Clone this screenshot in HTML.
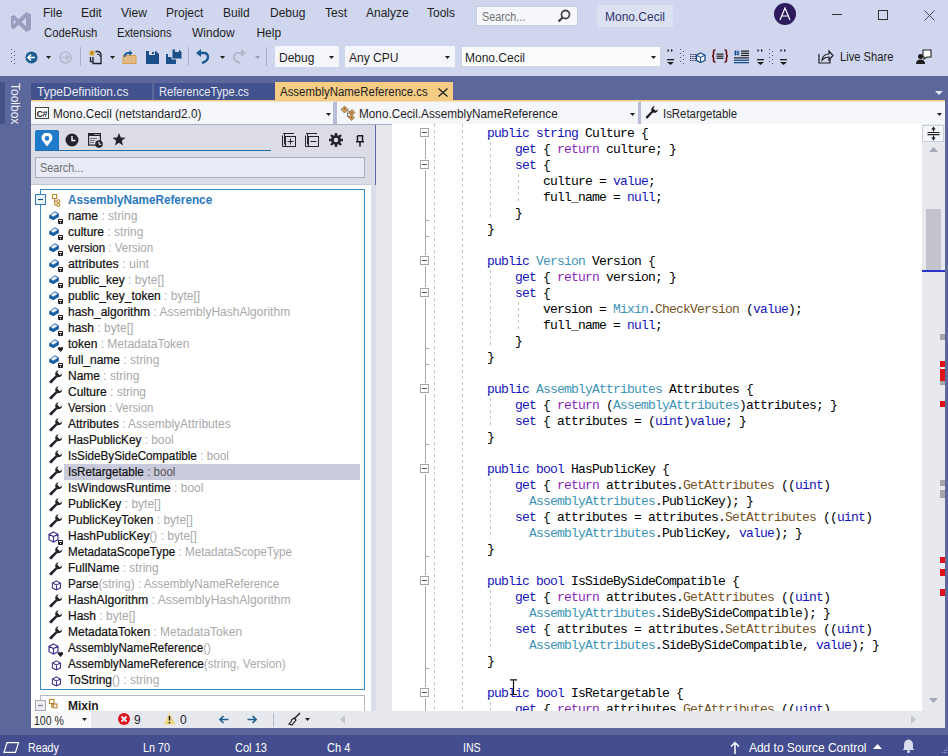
<!DOCTYPE html>
<html><head><meta charset="utf-8"><style>
html,body{margin:0;padding:0;}
body{width:948px;height:756px;overflow:hidden;position:relative;background:#5C689C;font-family:"Liberation Sans",sans-serif;}
.r{position:absolute;}
.b{-webkit-text-stroke:0.2px #101010;}
.t{position:absolute;white-space:pre;line-height:14px;}
.code{position:absolute;white-space:pre;font-family:"Liberation Mono",monospace;font-size:13px;letter-spacing:-0.8px;line-height:16px;color:#000;}
</style></head><body>
<div class="r" style="left:0px;top:0px;width:948px;height:76px;background:#CFD6EE;"></div>
<svg class="r" style="left:11px;top:12px;" width="20" height="20" viewBox="0 0 20 20"><path d="M0 4.3 L3 3 L7.6 7.3 L15.2 0 L20 2.4 V17.6 L15.2 20 L7.6 12.7 L3 17 L0 15.7 Z M2.5 7.6 V12.4 L5 10 Z M15 5.7 L10.6 10 L15 14.3 Z" fill="#9A9DBE" fill-rule="evenodd"/></svg>
<div class="t" style="left:43px;top:6px;font-size:12px;color:#1E1E1E;font-weight:normal;">File</div>
<div class="t" style="left:81px;top:6px;font-size:12px;color:#1E1E1E;font-weight:normal;">Edit</div>
<div class="t" style="left:121px;top:6px;font-size:12px;color:#1E1E1E;font-weight:normal;">View</div>
<div class="t" style="left:166px;top:6px;font-size:12px;color:#1E1E1E;font-weight:normal;">Project</div>
<div class="t" style="left:223px;top:6px;font-size:12px;color:#1E1E1E;font-weight:normal;">Build</div>
<div class="t" style="left:270px;top:6px;font-size:12px;color:#1E1E1E;font-weight:normal;">Debug</div>
<div class="t" style="left:325px;top:6px;font-size:12px;color:#1E1E1E;font-weight:normal;">Test</div>
<div class="t" style="left:366px;top:6px;font-size:12px;color:#1E1E1E;font-weight:normal;">Analyze</div>
<div class="t" style="left:427px;top:6px;font-size:12px;color:#1E1E1E;font-weight:normal;">Tools</div>
<div class="t" style="left:43.5px;top:26px;font-size:12px;color:#1E1E1E;font-weight:normal;transform-origin:0 0;transform:scaleX(0.94);">CodeRush</div>
<div class="t" style="left:117px;top:26px;font-size:12px;color:#1E1E1E;font-weight:normal;transform-origin:0 0;transform:scaleX(0.93);">Extensions</div>
<div class="t" style="left:192px;top:26px;font-size:12px;color:#1E1E1E;font-weight:normal;transform-origin:0 0;transform:scaleX(1);">Window</div>
<div class="t" style="left:256.4px;top:26px;font-size:12px;color:#1E1E1E;font-weight:normal;transform-origin:0 0;transform:scaleX(1);">Help</div>
<div class="r" style="left:476px;top:6px;width:102px;height:20px;background:#F6F7FB;box-sizing:border-box;border:1px solid #C9CEE2;"></div>
<div class="t" style="left:481.5px;top:10px;font-size:12px;color:#717171;font-weight:normal;transform-origin:0 0;transform:scaleX(0.9);">Search...</div>
<svg class="r" style="left:557px;top:9px;" width="14" height="14" viewBox="0 0 14 14"><circle cx="8.5" cy="5.5" r="4" fill="none" stroke="#4A4A4A" stroke-width="1.8"/><path d="M5.7 8.3 L1.5 12.5" stroke="#4A4A4A" stroke-width="2.4"/></svg>
<div class="r" style="left:597px;top:5px;width:76px;height:22px;background:#DCE1F3;"></div>
<div class="t" style="left:605px;top:10px;font-size:12px;color:#30346A;font-weight:normal;">Mono.Cecil</div>
<svg class="r" style="left:774px;top:3px;" width="22" height="22" viewBox="0 0 22 22"><circle cx="11" cy="11" r="11" fill="#2D1B5E"/><path d="M6 17 L11 5 L16 17 M7.8 13 H14.2" stroke="#fff" stroke-width="1.2" fill="none"/></svg>
<div class="r" style="left:832px;top:14px;width:10px;height:1px;background:#333;"></div>
<div class="r" style="left:878px;top:10px;width:10px;height:10px;background:transparent;box-sizing:border-box;border:1px solid #333;"></div>
<svg class="r" style="left:924px;top:10px;" width="11" height="11" viewBox="0 0 11 11"><path d="M0.5 0.5 L10.5 10.5 M10.5 0.5 L0.5 10.5" stroke="#3A3A48" stroke-width="0.9"/></svg>
<svg class="r" style="left:11px;top:48px;" width="6" height="18" viewBox="0 0 6 18"><rect x="0" y="1" width="1" height="1" fill="#5A5A6A"/><rect x="3" y="3" width="1" height="1" fill="#5A5A6A"/><rect x="0" y="5" width="1" height="1" fill="#5A5A6A"/><rect x="3" y="7" width="1" height="1" fill="#5A5A6A"/><rect x="0" y="9" width="1" height="1" fill="#5A5A6A"/><rect x="3" y="11" width="1" height="1" fill="#5A5A6A"/><rect x="0" y="13" width="1" height="1" fill="#5A5A6A"/><rect x="3" y="15" width="1" height="1" fill="#5A5A6A"/></svg>
<svg class="r" style="left:25px;top:51px;" width="13" height="13" viewBox="0 0 13 13"><circle cx="6.5" cy="6.5" r="6" fill="#1B5D93"/><path d="M3 6.5 H10 M6 3.5 L3 6.5 L6 9.5" stroke="#fff" stroke-width="1.6" fill="none"/></svg>
<svg class="r" style="left:46px;top:56px;" width="5" height="3" viewBox="0 0 5 3"><path d="M0 0 H5 L2.5 3 Z" fill="#1E1E1E"/></svg>
<svg class="r" style="left:59px;top:51px;" width="13" height="13" viewBox="0 0 13 13"><circle cx="6.5" cy="6.5" r="5.5" fill="none" stroke="#B4B9CC" stroke-width="1.6"/><path d="M3 6.5 H9.5 M7 4 L9.5 6.5 L7 9" stroke="#B4B9CC" stroke-width="1.6" fill="none"/></svg>
<div class="r" style="left:80px;top:47px;width:1px;height:19px;background:#A9AFC6;"></div>
<svg class="r" style="left:88px;top:49px;" width="15" height="16" viewBox="0 0 15 16"><path d="M2.5 8 V12.5 H4.5" stroke="#1E1E28" stroke-width="1.3" fill="none"/><path d="M5 8 V14.5 H13 V6 Q13 2.5 9.5 2.5 H7.5" stroke="#1E1E28" stroke-width="1.3" fill="none"/><path d="M12.5 8 Q12.5 5 9 5" stroke="#1E1E28" stroke-width="1" fill="none"/><g stroke="#D9A21C" stroke-width="1.1"><path d="M4 1 V7 M1 4 H7 M1.8 1.8 L6.2 6.2 M6.2 1.8 L1.8 6.2"/></g><circle cx="4" cy="4" r="1.2" fill="#B07A10"/></svg>
<svg class="r" style="left:110px;top:56px;" width="5" height="3" viewBox="0 0 5 3"><path d="M0 0 H5 L2.5 3 Z" fill="#1E1E1E"/></svg>
<svg class="r" style="left:122px;top:49px;" width="15" height="16" viewBox="0 0 15 16"><rect x="1" y="6.5" width="13" height="8" fill="#E9B77A" stroke="#D79D55" stroke-width="1"/><g fill="#C9C2B8"><rect x="3" y="9" width="2" height="1"/><rect x="7" y="9" width="2" height="1"/><rect x="11" y="9" width="1" height="1"/><rect x="2" y="12" width="2" height="1"/><rect x="6" y="12" width="3" height="1"/><rect x="10" y="12" width="2" height="1"/></g><path d="M2.5 8 Q2.5 4 7 4 H8" stroke="#1B5D93" stroke-width="1.8" fill="none"/><path d="M7.5 1 L10.5 4 L7.5 7 Z" fill="#1B5D93"/></svg>
<svg class="r" style="left:146px;top:51px;" width="13" height="13" viewBox="0 0 13 13"><path d="M0 0 H10 L13 3 V13 H0 Z" fill="#1B4F8A"/><rect x="3" y="0" width="6" height="4" fill="#CFD6EE"/><rect x="6" y="1" width="2" height="2" fill="#1B4F8A"/></svg>
<svg class="r" style="left:166px;top:49px;" width="16" height="15" viewBox="0 0 16 15"><path d="M0 5 H8 L10 7 V15 H0 Z" fill="#1B4F8A"/><path d="M6 0 H13 L16 3 V10 H6 Z" fill="#1B4F8A" stroke="#CFD6EE" stroke-width="1"/><rect x="2" y="5" width="4" height="3" fill="#CFD6EE"/><rect x="9" y="0" width="4" height="3" fill="#CFD6EE"/></svg>
<div class="r" style="left:188px;top:47px;width:1px;height:19px;background:#A9AFC6;"></div>
<svg class="r" style="left:196px;top:49px;" width="14" height="15" viewBox="0 0 14 15"><path d="M2 4 H8 Q12 4 12 8 Q12 12 6 14" stroke="#1B5D93" stroke-width="2.4" fill="none"/><path d="M0 4 L5 0 V8 Z" fill="#1B5D93"/></svg>
<svg class="r" style="left:220px;top:56px;" width="5" height="3" viewBox="0 0 5 3"><path d="M0 0 H5 L2.5 3 Z" fill="#1E1E1E"/></svg>
<svg class="r" style="left:232px;top:49px;" width="14" height="15" viewBox="0 0 14 15"><path d="M12 4 H6 Q2 4 2 8 Q2 12 8 14" stroke="#B4B9CC" stroke-width="2.2" fill="none"/><path d="M14 4 L9 0 V8 Z" fill="#B4B9CC"/></svg>
<svg class="r" style="left:255px;top:56px;" width="5" height="3" viewBox="0 0 5 3"><path d="M0 0 H5 L2.5 3 Z" fill="#9A9FB5"/></svg>
<div class="r" style="left:266px;top:47px;width:1px;height:19px;background:#A9AFC6;"></div>
<div class="r" style="left:275px;top:46px;width:64px;height:21px;background:#F5F6FB;box-sizing:border-box;border:none;"></div>
<div class="t" style="left:279px;top:51px;font-size:12px;color:#1E1E1E;font-weight:normal;">Debug</div>
<svg class="r" style="left:329px;top:56px;" width="5" height="3" viewBox="0 0 5 3"><path d="M0 0 H5 L2.5 3 Z" fill="#1E1E1E"/></svg>
<div class="r" style="left:345px;top:46px;width:110px;height:21px;background:#F5F6FB;box-sizing:border-box;border:none;"></div>
<div class="t" style="left:349px;top:51px;font-size:12px;color:#1E1E1E;font-weight:normal;">Any CPU</div>
<svg class="r" style="left:445px;top:56px;" width="5" height="3" viewBox="0 0 5 3"><path d="M0 0 H5 L2.5 3 Z" fill="#1E1E1E"/></svg>
<div class="r" style="left:461px;top:46px;width:200px;height:21px;background:#FAFBFD;box-sizing:border-box;border:1px solid #D0D4E4;"></div>
<div class="t" style="left:465px;top:51px;font-size:12px;color:#1E1E1E;font-weight:normal;">Mono.Cecil</div>
<svg class="r" style="left:651px;top:56px;" width="5" height="3" viewBox="0 0 5 3"><path d="M0 0 H5 L2.5 3 Z" fill="#1E1E1E"/></svg>
<svg class="r" style="left:667px;top:48px;" width="7" height="18" viewBox="0 0 7 18"><path d="M0.5 1 L2.5 2.5 L0.5 4 Z M4 1 L6 2.5 L4 4 Z" fill="#1E1E1E"/><rect x="0" y="11" width="7" height="1.3" fill="#1E1E1E"/><path d="M0 14 H7 L3.5 17 Z" fill="#1E1E1E"/></svg>
<svg class="r" style="left:680px;top:48px;" width="5" height="18" viewBox="0 0 5 18"><rect x="0" y="1" width="1" height="1" fill="#5A5A6A"/><rect x="3" y="3" width="1" height="1" fill="#5A5A6A"/><rect x="0" y="5" width="1" height="1" fill="#5A5A6A"/><rect x="3" y="7" width="1" height="1" fill="#5A5A6A"/><rect x="0" y="9" width="1" height="1" fill="#5A5A6A"/><rect x="3" y="11" width="1" height="1" fill="#5A5A6A"/><rect x="0" y="13" width="1" height="1" fill="#5A5A6A"/><rect x="3" y="15" width="1" height="1" fill="#5A5A6A"/></svg>
<svg class="r" style="left:689px;top:52px;" width="17" height="11" viewBox="0 0 17 11"><g fill="#2A2A3A"><rect x="1.0" y="2" width="1" height="1"/><rect x="1.0" y="4" width="1" height="1"/><rect x="1.0" y="6" width="1" height="1"/><rect x="1.0" y="8" width="1" height="1"/><rect x="2.7" y="2" width="1" height="1"/><rect x="2.7" y="4" width="1" height="1"/><rect x="2.7" y="6" width="1" height="1"/><rect x="2.7" y="8" width="1" height="1"/><rect x="4.4" y="2" width="1" height="1"/><rect x="4.4" y="4" width="1" height="1"/><rect x="4.4" y="6" width="1" height="1"/><rect x="4.4" y="8" width="1" height="1"/><rect x="6.1" y="2" width="1" height="1"/><rect x="6.1" y="4" width="1" height="1"/><rect x="6.1" y="6" width="1" height="1"/><rect x="6.1" y="8" width="1" height="1"/></g><path d="M11.5 1 L16 3.2 V8.3 L11.5 10.5 L7.5 8.3 V3.2 Z" fill="#fff" stroke="#1B4F8A" stroke-width="1.3"/><path d="M7.5 3.2 L11.5 5.4 L16 3.2 M11.5 5.4 V10.5" stroke="#1B4F8A" stroke-width="1.1" fill="none"/></svg>
<svg class="r" style="left:711px;top:49px;" width="18" height="14" viewBox="0 0 18 14"><path d="M4.5 0.8 Q2.5 0.8 2.5 3 V5.5 Q2.5 7 1 7 Q2.5 7 2.5 8.5 V11 Q2.5 13.2 4.5 13.2 M13.5 0.8 Q15.5 0.8 15.5 3 V5.5 Q15.5 7 17 7 Q15.5 7 15.5 8.5 V11 Q15.5 13.2 13.5 13.2" stroke="#6A1010" stroke-width="1.6" fill="none"/><g fill="#1E1E1E"><rect x="5.5" y="4.5" width="7" height="1.2"/><rect x="5.5" y="6.6" width="7" height="1.2"/><rect x="5.5" y="8.7" width="7" height="1.2"/></g></svg>
<svg class="r" style="left:734px;top:50px;" width="15" height="14" viewBox="0 0 15 14"><path d="M1.5 0.5 V5.5 M4 0.5 V5.5 M0 2 H5.5 M0 4.2 H5.5" stroke="#1B4F8A" stroke-width="1"/><g fill="#1E1E1E"><rect x="7" y="0.5" width="8" height="1.2"/><rect x="7" y="2.7" width="8" height="1.2"/><rect x="7" y="4.9" width="8" height="1.2"/><rect x="0" y="7.3" width="15" height="1.2"/></g><g fill="#1B4F8A"><rect x="0" y="9.6" width="15" height="1.3"/><rect x="0" y="12" width="15" height="1.3"/></g></svg>
<svg class="r" style="left:757px;top:48px;" width="7" height="18" viewBox="0 0 7 18"><path d="M0.5 1 L2.5 2.5 L0.5 4 Z M4 1 L6 2.5 L4 4 Z" fill="#1E1E1E"/><rect x="0" y="11" width="7" height="1.3" fill="#1E1E1E"/><path d="M0 14 H7 L3.5 17 Z" fill="#1E1E1E"/></svg>
<svg class="r" style="left:769px;top:48px;" width="5" height="18" viewBox="0 0 5 18"><rect x="0" y="1" width="1" height="1" fill="#5A5A6A"/><rect x="3" y="3" width="1" height="1" fill="#5A5A6A"/><rect x="0" y="5" width="1" height="1" fill="#5A5A6A"/><rect x="3" y="7" width="1" height="1" fill="#5A5A6A"/><rect x="0" y="9" width="1" height="1" fill="#5A5A6A"/><rect x="3" y="11" width="1" height="1" fill="#5A5A6A"/><rect x="0" y="13" width="1" height="1" fill="#5A5A6A"/><rect x="3" y="15" width="1" height="1" fill="#5A5A6A"/></svg>
<svg class="r" style="left:780px;top:48px;" width="7" height="18" viewBox="0 0 7 18"><path d="M0.5 1 L2.5 2.5 L0.5 4 Z M4 1 L6 2.5 L4 4 Z" fill="#1E1E1E"/><rect x="0" y="11" width="7" height="1.3" fill="#1E1E1E"/><path d="M0 14 H7 L3.5 17 Z" fill="#1E1E1E"/></svg>
<svg class="r" style="left:818px;top:49px;" width="16" height="15" viewBox="0 0 16 15"><path d="M1 5 V14 H12 V10" stroke="#1E1E1E" stroke-width="1.2" fill="none"/><path d="M4 11 Q5 5 11 5 V2 L15 6.5 L11 11 V8 Q7 8 4 11 Z" fill="none" stroke="#1E1E1E" stroke-width="1.2"/></svg>
<div class="t" style="left:839.5px;top:50px;font-size:12px;color:#1E1E1E;font-weight:normal;transform-origin:0 0;transform:scaleX(0.93);">Live Share</div>
<svg class="r" style="left:916px;top:49px;" width="16" height="15" viewBox="0 0 16 15"><path d="M7 1 H15 V8 H11 L8 10 V8 H7 Z" fill="#fff" stroke="#1E1E1E" stroke-width="1.1"/><circle cx="4.5" cy="7.5" r="2.5" fill="#1E1E1E"/><path d="M0 15 Q0 10.5 4.5 10.5 Q9 10.5 9 15 Z" fill="#1E1E1E"/></svg>
<div class="r" style="left:0px;top:76px;width:948px;height:680px;background:#5C689C;"></div>
<div class="r" style="left:0px;top:82px;width:5px;height:42px;background:#45528A;"></div>
<div class="t" style="left:10px;top:83px;font-size:12px;color:#EEF0F8;font-weight:normal;transform-origin:0 0;transform:translate(12px,0) rotate(90deg);">Toolbox</div>
<div class="r" style="left:31px;top:83px;width:121px;height:17px;background:#41528E;"></div>
<div class="t" style="left:37px;top:85px;font-size:12px;color:#E6E9F3;font-weight:normal;">TypeDefinition.cs</div>
<div class="r" style="left:154px;top:83px;width:121px;height:17px;background:#41528E;"></div>
<div class="t" style="left:158.5px;top:85px;font-size:12px;color:#E6E9F3;font-weight:normal;transform-origin:0 0;transform:scaleX(0.93);">ReferenceType.cs</div>
<div class="r" style="left:275px;top:82px;width:178px;height:20px;background:#F5CC84;"></div>
<div class="r" style="left:31px;top:100px;width:914px;height:1px;background:#F5CC84;"></div>
<div class="r" style="left:31px;top:101px;width:914px;height:1px;background:#EEE2C6;"></div>
<div class="t" style="left:279.5px;top:85px;font-size:12px;color:#1E1E1E;font-weight:normal;transform-origin:0 0;transform:scaleX(0.955);">AssemblyNameReference.cs</div>
<svg class="r" style="left:438px;top:88px;" width="10" height="9" viewBox="0 0 10 9"><path d="M0.5 0.5 L9.5 8.5 M9.5 0.5 L0.5 8.5" stroke="#1E1E1E" stroke-width="1.3"/></svg>
<svg class="r" style="left:935px;top:91px;" width="8" height="4" viewBox="0 0 8 4"><path d="M0 0 H8 L4 4 Z" fill="#E6E9F3"/></svg>
<div class="r" style="left:31px;top:102px;width:914px;height:22px;background:#F5F6FA;"></div>
<div class="r" style="left:31px;top:124px;width:914px;height:1px;background:#A9AFC8;"></div>
<div class="r" style="left:333px;top:102px;width:4px;height:22px;background:#B9BCD8;"></div>
<div class="r" style="left:638px;top:102px;width:3px;height:22px;background:#B9BCD8;"></div>
<svg class="r" style="left:35px;top:107px;" width="14" height="12" viewBox="0 0 14 12"><rect x="0.5" y="0.5" width="13" height="11" fill="#fff" stroke="#3C4A3C"/><text x="1.5" y="9.5" font-family="Liberation Sans" font-size="9" font-weight="bold" fill="#1E1E1E" letter-spacing="-0.5">C#</text></svg>
<div class="t" style="left:52.5px;top:107px;font-size:12px;color:#1E1E1E;font-weight:normal;transform-origin:0 0;transform:scaleX(0.98);">Mono.Cecil (netstandard2.0)</div>
<svg class="r" style="left:326px;top:113px;" width="5" height="3" viewBox="0 0 5 3"><path d="M0 0 H5 L2.5 3 Z" fill="#1E1E1E"/></svg>
<svg class="r" style="left:340px;top:105px;" width="16" height="16" viewBox="0 0 16 16"><path d="M4.5 4.5 L11.5 7.5 L11.5 12" stroke="#8A6A3A" stroke-width="1" fill="none"/><rect x="7.5" y="8" width="3.5" height="3.5" fill="#F2EBD8" stroke="#6A5A40" stroke-width="0.8"/><g fill="#C49A58" stroke="#8A6A3A" stroke-width="0.7"><path d="M4.5 1 L8 4.5 L4.5 8 L1 4.5 Z"/><path d="M12 4.5 L15 7.5 L12 10.5 L9 7.5 Z"/><path d="M11.5 9.5 L14.5 12.5 L11.5 15.5 L8.5 12.5 Z"/></g><g fill="#D02020"><rect x="4" y="3" width="1" height="1"/><rect x="11.5" y="7" width="1" height="1"/><rect x="11" y="12" width="1" height="1"/></g></svg>
<div class="t" style="left:358.5px;top:107px;font-size:12px;color:#1E1E1E;font-weight:normal;transform-origin:0 0;transform:scaleX(0.98);">Mono.Cecil.AssemblyNameReference</div>
<svg class="r" style="left:630px;top:113px;" width="5" height="3" viewBox="0 0 5 3"><path d="M0 0 H5 L2.5 3 Z" fill="#1E1E1E"/></svg>
<svg class="r" style="left:645px;top:106px;" width="14" height="14" viewBox="0 0 14 14"><path d="M13 3.5 A3.5 3.5 0 0 1 8 6.5 L2.5 12.5 A1.4 1.4 0 0 1 0.8 10.8 L6.5 5 A3.5 3.5 0 0 1 10 0.2 L8.2 2.5 L10.8 4.8 Z" fill="#1E1E1E"/></svg>
<div class="t" style="left:663px;top:107px;font-size:12px;color:#1E1E1E;font-weight:normal;transform-origin:0 0;transform:scaleX(0.95);">IsRetargetable</div>
<svg class="r" style="left:937px;top:113px;" width="5" height="3" viewBox="0 0 5 3"><path d="M0 0 H5 L2.5 3 Z" fill="#1E1E1E"/></svg>
<div class="r" style="left:31px;top:125px;width:344px;height:586px;background:#DBDCE6;"></div>
<div class="r" style="left:35px;top:130px;width:24px;height:20px;background:#1F7BC9;border-radius:2px 2px 0 0;"></div>
<svg class="r" style="left:41px;top:133px;" width="12" height="14" viewBox="0 0 12 14"><path d="M6 13.5 L1.6 7.8 A5.3 5.3 0 1 1 10.4 7.8 Z" fill="#fff"/><circle cx="6" cy="5.4" r="2.3" fill="#1F7BC9"/></svg>
<svg class="r" style="left:65px;top:133px;" width="14" height="14" viewBox="0 0 14 14"><circle cx="7" cy="7" r="6.5" fill="#252530"/><path d="M7 3 V7.5 H10.5" stroke="#fff" stroke-width="1.4" fill="none"/></svg>
<svg class="r" style="left:88px;top:133px;" width="15" height="15" viewBox="0 0 15 15"><rect x="0.6" y="0.6" width="11.8" height="11.5" fill="none" stroke="#252530" stroke-width="1.2"/><rect x="0" y="0" width="13" height="3" fill="#252530"/><g fill="#fff"><rect x="6.5" y="1" width="1" height="1"/><rect x="8.5" y="1" width="1" height="1"/><rect x="10.5" y="1" width="1" height="1"/></g><g fill="#6A6A78"><rect x="2" y="5" width="7" height="1"/><rect x="2" y="7" width="5" height="1"/><rect x="2" y="9" width="4" height="1"/></g><circle cx="11" cy="11" r="3.8" fill="#252530"/><path d="M11 8.8 V11.3 H13.2" stroke="#fff" fill="none"/></svg>
<svg class="r" style="left:112px;top:133px;" width="14" height="13" viewBox="0 0 14 13"><path d="M7 0 L8.8 4.6 L13.5 4.8 L9.8 7.8 L11.1 12.5 L7 9.8 L2.9 12.5 L4.2 7.8 L0.5 4.8 L5.2 4.6 Z" fill="#252530"/></svg>
<div class="r" style="left:35px;top:150px;width:236px;height:1px;background:#1F6FAF;"></div>
<svg class="r" style="left:282px;top:133px;" width="14" height="14" viewBox="0 0 14 14"><path d="M0.5 2.5 V13.5 M2.5 1 V11.5 M0.5 13.5 H11 M1 0.5 H12" stroke="#252530" fill="none"/><rect x="3.5" y="3.5" width="10" height="10" fill="none" stroke="#252530"/><path d="M8.5 5.5 V11.5 M5.5 8.5 H11.5" stroke="#252530"/></svg>
<svg class="r" style="left:305px;top:133px;" width="14" height="14" viewBox="0 0 14 14"><path d="M0.5 2.5 V13.5 M2.5 1 V11.5 M0.5 13.5 H11 M1 0.5 H12" stroke="#252530" fill="none"/><rect x="3.5" y="3.5" width="10" height="10" fill="none" stroke="#252530"/><path d="M5.5 8.5 H11.5" stroke="#252530"/></svg>
<svg class="r" style="left:329px;top:133px;" width="14" height="14" viewBox="0 0 14 14"><circle cx="7" cy="7" r="5" fill="#252530"/><g stroke="#252530" stroke-width="2.4"><path d="M7 0 V14 M0 7 H14 M2 2 L12 12 M12 2 L2 12"/></g><circle cx="7" cy="7" r="2.2" fill="#DBDCE6"/></svg>
<svg class="r" style="left:356px;top:135px;" width="8" height="12" viewBox="0 0 8 12"><path d="M1.5 0.8 H6.5 V6.5 M1.5 0.8 V6.5 M0 6.8 H8 M4 6.8 V11.5" stroke="#1E1E28" stroke-width="1.6" fill="none"/></svg>
<div class="r" style="left:35px;top:157px;width:330px;height:21px;background:#E9EBF6;box-sizing:border-box;border:1px solid #A9ACBC;"></div>
<div class="t" style="left:40px;top:161px;font-size:12px;color:#6D6D6D;font-weight:normal;transform-origin:0 0;transform:scaleX(0.9);">Search...</div>
<div class="r" style="left:31px;top:184px;width:340px;height:1px;background:#C6C8D2;"></div>
<div class="r" style="left:31px;top:185px;width:340px;height:526px;background:#FFFFFF;"></div>
<div class="r" style="left:371px;top:185px;width:5px;height:526px;background:#DCDEEA;"></div>
<div class="r" style="left:40px;top:189px;width:325px;height:501px;background:transparent;box-sizing:border-box;border:1.5px solid #3A8DC0;"></div>
<div class="r" style="left:40px;top:695px;width:325px;height:16px;background:transparent;box-sizing:border-box;border:1px solid #B8B8B8;border-bottom:none;"></div>
<svg class="r" style="left:35px;top:194px;" width="11" height="11" viewBox="0 0 11 11"><rect x="0.5" y="0.5" width="10" height="10" fill="#EEF4FC" stroke="#2F7DC0"/><path d="M3 5.5 H8" stroke="#1B4F80" stroke-width="1.2"/></svg>
<svg class="r" style="left:51px;top:193px;" width="10" height="14" viewBox="0 0 10 14"><g fill="#fff" stroke="#B8862E" stroke-width="1.1"><path d="M3.7 5.5 V12 H6 M3.7 8.3 H6" fill="none"/><rect x="1.5" y="1.5" width="4.2" height="4"/><circle cx="7.3" cy="8.3" r="1.5"/><circle cx="7.3" cy="12" r="1.5"/></g></svg>
<div class="t" style="left:68px;top:193px;font-size:12px;color:#2A78C2;font-weight:bold;transform-origin:0 0;transform:scaleX(0.978);">AssemblyNameReference</div>
<svg class="r" style="left:48px;top:210px;" width="15" height="15" viewBox="0 0 15 15"><path d="M1.3 5.2 L7 1.2 L10.9 3.4 V6.9 L5.2 10.2 L1 8.1 Z" fill="#1B5FA6"/><path d="M2.6 5.1 L7 2.2 L9.7 3.7 L5.3 6.7 Z" fill="#E9F3FF"/><rect x="10" y="8.9" width="5" height="5" rx="0.8" fill="#201A26"/><rect x="11" y="10" width="3" height="1" fill="#fff"/><rect x="12" y="12" width="1" height="1" fill="#fff"/></svg>
<div class="t" style="left:68px;top:209px;font-size:12px;color:#101010;transform-origin:0 0;transform:scaleX(1);"><span class="b">name</span> <span style="color:#A9A9A9">: string</span></div>
<svg class="r" style="left:48px;top:226px;" width="15" height="15" viewBox="0 0 15 15"><path d="M1.3 5.2 L7 1.2 L10.9 3.4 V6.9 L5.2 10.2 L1 8.1 Z" fill="#1B5FA6"/><path d="M2.6 5.1 L7 2.2 L9.7 3.7 L5.3 6.7 Z" fill="#E9F3FF"/><rect x="10" y="8.9" width="5" height="5" rx="0.8" fill="#201A26"/><rect x="11" y="10" width="3" height="1" fill="#fff"/><rect x="12" y="12" width="1" height="1" fill="#fff"/></svg>
<div class="t" style="left:68px;top:225px;font-size:12px;color:#101010;transform-origin:0 0;transform:scaleX(1);"><span class="b">culture</span> <span style="color:#A9A9A9">: string</span></div>
<svg class="r" style="left:48px;top:242px;" width="15" height="15" viewBox="0 0 15 15"><path d="M1.3 5.2 L7 1.2 L10.9 3.4 V6.9 L5.2 10.2 L1 8.1 Z" fill="#1B5FA6"/><path d="M2.6 5.1 L7 2.2 L9.7 3.7 L5.3 6.7 Z" fill="#E9F3FF"/><rect x="10" y="8.9" width="5" height="5" rx="0.8" fill="#201A26"/><rect x="11" y="10" width="3" height="1" fill="#fff"/><rect x="12" y="12" width="1" height="1" fill="#fff"/></svg>
<div class="t" style="left:68px;top:241px;font-size:12px;color:#101010;transform-origin:0 0;transform:scaleX(0.9594);"><span class="b">version</span> <span style="color:#A9A9A9">: Version</span></div>
<svg class="r" style="left:48px;top:258px;" width="15" height="15" viewBox="0 0 15 15"><path d="M1.3 5.2 L7 1.2 L10.9 3.4 V6.9 L5.2 10.2 L1 8.1 Z" fill="#1B5FA6"/><path d="M2.6 5.1 L7 2.2 L9.7 3.7 L5.3 6.7 Z" fill="#E9F3FF"/><rect x="10" y="8.9" width="5" height="5" rx="0.8" fill="#201A26"/><rect x="11" y="10" width="3" height="1" fill="#fff"/><rect x="12" y="12" width="1" height="1" fill="#fff"/></svg>
<div class="t" style="left:68px;top:257px;font-size:12px;color:#101010;transform-origin:0 0;transform:scaleX(1.028);"><span class="b">attributes</span> <span style="color:#A9A9A9">: uint</span></div>
<svg class="r" style="left:48px;top:274px;" width="15" height="15" viewBox="0 0 15 15"><path d="M1.3 5.2 L7 1.2 L10.9 3.4 V6.9 L5.2 10.2 L1 8.1 Z" fill="#1B5FA6"/><path d="M2.6 5.1 L7 2.2 L9.7 3.7 L5.3 6.7 Z" fill="#E9F3FF"/><rect x="10" y="8.9" width="5" height="5" rx="0.8" fill="#201A26"/><rect x="11" y="10" width="3" height="1" fill="#fff"/><rect x="12" y="12" width="1" height="1" fill="#fff"/></svg>
<div class="t" style="left:68px;top:273px;font-size:12px;color:#101010;transform-origin:0 0;transform:scaleX(1);"><span class="b">public_key</span> <span style="color:#A9A9A9">: byte[]</span></div>
<svg class="r" style="left:48px;top:290px;" width="15" height="15" viewBox="0 0 15 15"><path d="M1.3 5.2 L7 1.2 L10.9 3.4 V6.9 L5.2 10.2 L1 8.1 Z" fill="#1B5FA6"/><path d="M2.6 5.1 L7 2.2 L9.7 3.7 L5.3 6.7 Z" fill="#E9F3FF"/><rect x="10" y="8.9" width="5" height="5" rx="0.8" fill="#201A26"/><rect x="11" y="10" width="3" height="1" fill="#fff"/><rect x="12" y="12" width="1" height="1" fill="#fff"/></svg>
<div class="t" style="left:68px;top:289px;font-size:12px;color:#101010;transform-origin:0 0;transform:scaleX(1);"><span class="b">public_key_token</span> <span style="color:#A9A9A9">: byte[]</span></div>
<svg class="r" style="left:48px;top:306px;" width="15" height="15" viewBox="0 0 15 15"><path d="M1.3 5.2 L7 1.2 L10.9 3.4 V6.9 L5.2 10.2 L1 8.1 Z" fill="#1B5FA6"/><path d="M2.6 5.1 L7 2.2 L9.7 3.7 L5.3 6.7 Z" fill="#E9F3FF"/><rect x="10" y="8.9" width="5" height="5" rx="0.8" fill="#201A26"/><rect x="11" y="10" width="3" height="1" fill="#fff"/><rect x="12" y="12" width="1" height="1" fill="#fff"/></svg>
<div class="t" style="left:68px;top:305px;font-size:12px;color:#101010;transform-origin:0 0;transform:scaleX(1);"><span class="b">hash_algorithm</span> <span style="color:#A9A9A9">: AssemblyHashAlgorithm</span></div>
<svg class="r" style="left:48px;top:322px;" width="15" height="15" viewBox="0 0 15 15"><path d="M1.3 5.2 L7 1.2 L10.9 3.4 V6.9 L5.2 10.2 L1 8.1 Z" fill="#1B5FA6"/><path d="M2.6 5.1 L7 2.2 L9.7 3.7 L5.3 6.7 Z" fill="#E9F3FF"/><rect x="10" y="8.9" width="5" height="5" rx="0.8" fill="#201A26"/><rect x="11" y="10" width="3" height="1" fill="#fff"/><rect x="12" y="12" width="1" height="1" fill="#fff"/></svg>
<div class="t" style="left:68px;top:321px;font-size:12px;color:#101010;transform-origin:0 0;transform:scaleX(1);"><span class="b">hash</span> <span style="color:#A9A9A9">: byte[]</span></div>
<svg class="r" style="left:48px;top:338px;" width="15" height="15" viewBox="0 0 15 15"><path d="M1.3 5.2 L7 1.2 L10.9 3.4 V6.9 L5.2 10.2 L1 8.1 Z" fill="#1B5FA6"/><path d="M2.6 5.1 L7 2.2 L9.7 3.7 L5.3 6.7 Z" fill="#E9F3FF"/><path d="M12.5 14 L10 11.2 A1.3 1.3 0 0 1 12.5 9.8 A1.3 1.3 0 0 1 15 11.2 Z" fill="#201A26"/></svg>
<div class="t" style="left:68px;top:337px;font-size:12px;color:#101010;transform-origin:0 0;transform:scaleX(1);"><span class="b">token</span> <span style="color:#A9A9A9">: MetadataToken</span></div>
<svg class="r" style="left:48px;top:354px;" width="15" height="15" viewBox="0 0 15 15"><path d="M1.3 5.2 L7 1.2 L10.9 3.4 V6.9 L5.2 10.2 L1 8.1 Z" fill="#1B5FA6"/><path d="M2.6 5.1 L7 2.2 L9.7 3.7 L5.3 6.7 Z" fill="#E9F3FF"/><rect x="10" y="8.9" width="5" height="5" rx="0.8" fill="#201A26"/><rect x="11" y="10" width="3" height="1" fill="#fff"/><rect x="12" y="12" width="1" height="1" fill="#fff"/></svg>
<div class="t" style="left:68px;top:353px;font-size:12px;color:#101010;transform-origin:0 0;transform:scaleX(1);"><span class="b">full_name</span> <span style="color:#A9A9A9">: string</span></div>
<svg class="r" style="left:49px;top:370px;" width="14" height="14" viewBox="0 0 14 14"><path d="M13.2 3.6 A3.6 3.6 0 0 1 8.4 7 L2.8 13 A1.5 1.5 0 0 1 0.7 10.9 L6.6 5.4 A3.6 3.6 0 0 1 9.8 0.2 L8.1 2.6 L10.8 5.2 Z" fill="#23232B"/></svg>
<div class="t" style="left:68px;top:369px;font-size:12px;color:#101010;transform-origin:0 0;transform:scaleX(1);"><span class="b">Name</span> <span style="color:#A9A9A9">: string</span></div>
<svg class="r" style="left:49px;top:386px;" width="14" height="14" viewBox="0 0 14 14"><path d="M13.2 3.6 A3.6 3.6 0 0 1 8.4 7 L2.8 13 A1.5 1.5 0 0 1 0.7 10.9 L6.6 5.4 A3.6 3.6 0 0 1 9.8 0.2 L8.1 2.6 L10.8 5.2 Z" fill="#23232B"/></svg>
<div class="t" style="left:68px;top:385px;font-size:12px;color:#101010;transform-origin:0 0;transform:scaleX(1);"><span class="b">Culture</span> <span style="color:#A9A9A9">: string</span></div>
<svg class="r" style="left:49px;top:402px;" width="14" height="14" viewBox="0 0 14 14"><path d="M13.2 3.6 A3.6 3.6 0 0 1 8.4 7 L2.8 13 A1.5 1.5 0 0 1 0.7 10.9 L6.6 5.4 A3.6 3.6 0 0 1 9.8 0.2 L8.1 2.6 L10.8 5.2 Z" fill="#23232B"/></svg>
<div class="t" style="left:68px;top:401px;font-size:12px;color:#101010;transform-origin:0 0;transform:scaleX(0.9467);"><span class="b">Version</span> <span style="color:#A9A9A9">: Version</span></div>
<svg class="r" style="left:49px;top:418px;" width="14" height="14" viewBox="0 0 14 14"><path d="M13.2 3.6 A3.6 3.6 0 0 1 8.4 7 L2.8 13 A1.5 1.5 0 0 1 0.7 10.9 L6.6 5.4 A3.6 3.6 0 0 1 9.8 0.2 L8.1 2.6 L10.8 5.2 Z" fill="#23232B"/></svg>
<div class="t" style="left:68px;top:417px;font-size:12px;color:#101010;transform-origin:0 0;transform:scaleX(1);"><span class="b">Attributes</span> <span style="color:#A9A9A9">: AssemblyAttributes</span></div>
<svg class="r" style="left:49px;top:434px;" width="14" height="14" viewBox="0 0 14 14"><path d="M13.2 3.6 A3.6 3.6 0 0 1 8.4 7 L2.8 13 A1.5 1.5 0 0 1 0.7 10.9 L6.6 5.4 A3.6 3.6 0 0 1 9.8 0.2 L8.1 2.6 L10.8 5.2 Z" fill="#23232B"/></svg>
<div class="t" style="left:68px;top:433px;font-size:12px;color:#101010;transform-origin:0 0;transform:scaleX(0.9832);"><span class="b">HasPublicKey</span> <span style="color:#A9A9A9">: bool</span></div>
<svg class="r" style="left:49px;top:450px;" width="14" height="14" viewBox="0 0 14 14"><path d="M13.2 3.6 A3.6 3.6 0 0 1 8.4 7 L2.8 13 A1.5 1.5 0 0 1 0.7 10.9 L6.6 5.4 A3.6 3.6 0 0 1 9.8 0.2 L8.1 2.6 L10.8 5.2 Z" fill="#23232B"/></svg>
<div class="t" style="left:68px;top:449px;font-size:12px;color:#101010;transform-origin:0 0;transform:scaleX(0.9757);"><span class="b">IsSideBySideCompatible</span> <span style="color:#A9A9A9">: bool</span></div>
<div class="r" style="left:64px;top:464px;width:296px;height:16px;background:#C9CADB;"></div>
<svg class="r" style="left:49px;top:466px;" width="14" height="14" viewBox="0 0 14 14"><path d="M13.2 3.6 A3.6 3.6 0 0 1 8.4 7 L2.8 13 A1.5 1.5 0 0 1 0.7 10.9 L6.6 5.4 A3.6 3.6 0 0 1 9.8 0.2 L8.1 2.6 L10.8 5.2 Z" fill="#23232B"/></svg>
<div class="t" style="left:68px;top:465px;font-size:12px;color:#101010;transform-origin:0 0;transform:scaleX(0.9702);"><span class="b">IsRetargetable</span> <span style="color:#555555">: bool</span></div>
<svg class="r" style="left:49px;top:482px;" width="14" height="14" viewBox="0 0 14 14"><path d="M13.2 3.6 A3.6 3.6 0 0 1 8.4 7 L2.8 13 A1.5 1.5 0 0 1 0.7 10.9 L6.6 5.4 A3.6 3.6 0 0 1 9.8 0.2 L8.1 2.6 L10.8 5.2 Z" fill="#23232B"/></svg>
<div class="t" style="left:68px;top:481px;font-size:12px;color:#101010;transform-origin:0 0;transform:scaleX(1);"><span class="b">IsWindowsRuntime</span> <span style="color:#A9A9A9">: bool</span></div>
<svg class="r" style="left:49px;top:498px;" width="14" height="14" viewBox="0 0 14 14"><path d="M13.2 3.6 A3.6 3.6 0 0 1 8.4 7 L2.8 13 A1.5 1.5 0 0 1 0.7 10.9 L6.6 5.4 A3.6 3.6 0 0 1 9.8 0.2 L8.1 2.6 L10.8 5.2 Z" fill="#23232B"/></svg>
<div class="t" style="left:68px;top:497px;font-size:12px;color:#101010;transform-origin:0 0;transform:scaleX(1);"><span class="b">PublicKey</span> <span style="color:#A9A9A9">: byte[]</span></div>
<svg class="r" style="left:49px;top:514px;" width="14" height="14" viewBox="0 0 14 14"><path d="M13.2 3.6 A3.6 3.6 0 0 1 8.4 7 L2.8 13 A1.5 1.5 0 0 1 0.7 10.9 L6.6 5.4 A3.6 3.6 0 0 1 9.8 0.2 L8.1 2.6 L10.8 5.2 Z" fill="#23232B"/></svg>
<div class="t" style="left:68px;top:513px;font-size:12px;color:#101010;transform-origin:0 0;transform:scaleX(1);"><span class="b">PublicKeyToken</span> <span style="color:#A9A9A9">: byte[]</span></div>
<svg class="r" style="left:48px;top:531px;" width="15" height="15" viewBox="0 0 15 15"><path d="M5.5 1 L10 3.3 V8.7 L5.5 11 L1 8.7 V3.3 Z M1 3.3 L5.5 5.6 L10 3.3 M5.5 5.6 V11" fill="none" stroke="#3A3088" stroke-width="1.15"/><rect x="10" y="8.9" width="5" height="5" rx="0.8" fill="#201A26"/><rect x="11" y="10" width="3" height="1" fill="#fff"/><rect x="12" y="12" width="1" height="1" fill="#fff"/></svg>
<div class="t" style="left:68px;top:529px;font-size:12px;color:#101010;transform-origin:0 0;transform:scaleX(1);"><span class="b">HashPublicKey</span><span style="color:#A9A9A9">() : byte[]</span></div>
<svg class="r" style="left:49px;top:546px;" width="14" height="14" viewBox="0 0 14 14"><path d="M13.2 3.6 A3.6 3.6 0 0 1 8.4 7 L2.8 13 A1.5 1.5 0 0 1 0.7 10.9 L6.6 5.4 A3.6 3.6 0 0 1 9.8 0.2 L8.1 2.6 L10.8 5.2 Z" fill="#23232B"/></svg>
<div class="t" style="left:68px;top:545px;font-size:12px;color:#101010;transform-origin:0 0;transform:scaleX(0.9735);"><span class="b">MetadataScopeType</span> <span style="color:#A9A9A9">: MetadataScopeType</span></div>
<svg class="r" style="left:49px;top:562px;" width="14" height="14" viewBox="0 0 14 14"><path d="M13.2 3.6 A3.6 3.6 0 0 1 8.4 7 L2.8 13 A1.5 1.5 0 0 1 0.7 10.9 L6.6 5.4 A3.6 3.6 0 0 1 9.8 0.2 L8.1 2.6 L10.8 5.2 Z" fill="#23232B"/></svg>
<div class="t" style="left:68px;top:561px;font-size:12px;color:#101010;transform-origin:0 0;transform:scaleX(1);"><span class="b">FullName</span> <span style="color:#A9A9A9">: string</span></div>
<svg class="r" style="left:51px;top:580px;" width="12" height="12" viewBox="0 0 12 12"><g transform="translate(0.5,0) scale(0.9)"><path d="M5.5 1 L10 3.3 V8.7 L5.5 11 L1 8.7 V3.3 Z M1 3.3 L5.5 5.6 L10 3.3 M5.5 5.6 V11" fill="none" stroke="#3A3088" stroke-width="1.15"/></g></svg>
<div class="t" style="left:68px;top:577px;font-size:12px;color:#101010;transform-origin:0 0;transform:scaleX(0.971);"><span class="b">Parse</span><span style="color:#A9A9A9">(string) : AssemblyNameReference</span></div>
<svg class="r" style="left:49px;top:594px;" width="14" height="14" viewBox="0 0 14 14"><path d="M13.2 3.6 A3.6 3.6 0 0 1 8.4 7 L2.8 13 A1.5 1.5 0 0 1 0.7 10.9 L6.6 5.4 A3.6 3.6 0 0 1 9.8 0.2 L8.1 2.6 L10.8 5.2 Z" fill="#23232B"/></svg>
<div class="t" style="left:68px;top:593px;font-size:12px;color:#101010;transform-origin:0 0;transform:scaleX(1.0183);"><span class="b">HashAlgorithm</span> <span style="color:#A9A9A9">: AssemblyHashAlgorithm</span></div>
<svg class="r" style="left:49px;top:610px;" width="14" height="14" viewBox="0 0 14 14"><path d="M13.2 3.6 A3.6 3.6 0 0 1 8.4 7 L2.8 13 A1.5 1.5 0 0 1 0.7 10.9 L6.6 5.4 A3.6 3.6 0 0 1 9.8 0.2 L8.1 2.6 L10.8 5.2 Z" fill="#23232B"/></svg>
<div class="t" style="left:68px;top:609px;font-size:12px;color:#101010;transform-origin:0 0;transform:scaleX(1);"><span class="b">Hash</span> <span style="color:#A9A9A9">: byte[]</span></div>
<svg class="r" style="left:49px;top:626px;" width="14" height="14" viewBox="0 0 14 14"><path d="M13.2 3.6 A3.6 3.6 0 0 1 8.4 7 L2.8 13 A1.5 1.5 0 0 1 0.7 10.9 L6.6 5.4 A3.6 3.6 0 0 1 9.8 0.2 L8.1 2.6 L10.8 5.2 Z" fill="#23232B"/></svg>
<div class="t" style="left:68px;top:625px;font-size:12px;color:#101010;transform-origin:0 0;transform:scaleX(1);"><span class="b">MetadataToken</span> <span style="color:#A9A9A9">: MetadataToken</span></div>
<svg class="r" style="left:48px;top:643px;" width="15" height="15" viewBox="0 0 15 15"><path d="M5.5 1 L10 3.3 V8.7 L5.5 11 L1 8.7 V3.3 Z M1 3.3 L5.5 5.6 L10 3.3 M5.5 5.6 V11" fill="none" stroke="#3A3088" stroke-width="1.15"/><path d="M12.5 14 L10 11.2 A1.3 1.3 0 0 1 12.5 9.8 A1.3 1.3 0 0 1 15 11.2 Z" fill="#201A26"/></svg>
<div class="t" style="left:68px;top:641px;font-size:12px;color:#101010;transform-origin:0 0;transform:scaleX(0.9695);"><span class="b">AssemblyNameReference</span><span style="color:#A9A9A9">()</span></div>
<svg class="r" style="left:51px;top:660px;" width="12" height="12" viewBox="0 0 12 12"><g transform="translate(0.5,0) scale(0.9)"><path d="M5.5 1 L10 3.3 V8.7 L5.5 11 L1 8.7 V3.3 Z M1 3.3 L5.5 5.6 L10 3.3 M5.5 5.6 V11" fill="none" stroke="#3A3088" stroke-width="1.15"/></g></svg>
<div class="t" style="left:68px;top:657px;font-size:12px;color:#101010;transform-origin:0 0;transform:scaleX(0.974);"><span class="b">AssemblyNameReference</span><span style="color:#A9A9A9">(string, Version)</span></div>
<svg class="r" style="left:51px;top:676px;" width="12" height="12" viewBox="0 0 12 12"><g transform="translate(0.5,0) scale(0.9)"><path d="M5.5 1 L10 3.3 V8.7 L5.5 11 L1 8.7 V3.3 Z M1 3.3 L5.5 5.6 L10 3.3 M5.5 5.6 V11" fill="none" stroke="#3A3088" stroke-width="1.15"/></g></svg>
<div class="t" style="left:68px;top:673px;font-size:12px;color:#101010;transform-origin:0 0;transform:scaleX(1);"><span class="b">ToString</span><span style="color:#A9A9A9">() : string</span></div>
<svg class="r" style="left:35px;top:700px;" width="11" height="11" viewBox="0 0 11 11"><rect x="0.5" y="0.5" width="10" height="10" fill="#ECECF2" stroke="#A8A8B0"/><path d="M3 5.5 H8" stroke="#8080A0" stroke-width="1.2"/></svg>
<svg class="r" style="left:48px;top:698px;" width="10" height="12" viewBox="0 0 10 12"><g fill="#fff" stroke="#B8862E" stroke-width="1.1"><path d="M3.7 5.5 V10 M3.7 8 H5.5" fill="none"/><rect x="1.5" y="1.5" width="4.5" height="4"/><rect x="5.5" y="6" width="3.5" height="3.8"/></g><rect x="4.5" y="5.5" width="1" height="1" fill="#E02020"/></svg>
<div class="t" style="left:68px;top:699px;font-size:12px;color:#1E1E1E;font-weight:bold;">Mixin</div>
<div class="r" style="left:376px;top:125px;width:16px;height:586px;background:#E8E8EC;"></div>
<div class="r" style="left:392px;top:124px;width:530px;height:587px;background:#FFFFFF;"></div>
<div class="r" style="left:922px;top:124px;width:23px;height:587px;background:#E8E9EE;"></div>
<div class="r" style="left:922px;top:125px;width:22px;height:17px;background:#F4F5F9;box-sizing:border-box;border:1px solid #C9CCDA;"></div>
<svg class="r" style="left:927px;top:126px;" width="13" height="15" viewBox="0 0 13 15"><path d="M0.5 6.5 H12.5 M0.5 8.7 H12.5" stroke="#1E1E28" stroke-width="1.2"/><path d="M6.5 2 V5.5 M6.5 9.5 V13" stroke="#1E1E28" stroke-width="1.2"/><path d="M4.2 3.5 L6.5 0.5 L8.8 3.5 Z M4.2 11.5 L6.5 14.5 L8.8 11.5 Z" fill="#1E1E28"/></svg>
<svg class="r" style="left:929px;top:147px;" width="9" height="5" viewBox="0 0 9 5"><path d="M0 5 H9 L4.5 0 Z" fill="#A5A8B8"/></svg>
<svg class="r" style="left:929px;top:698px;" width="9" height="5" viewBox="0 0 9 5"><path d="M0 0 H9 L4.5 5 Z" fill="#A5A8B8"/></svg>
<div class="r" style="left:926px;top:209px;width:15px;height:61px;background:#C2C3CB;"></div>
<div class="r" style="left:922px;top:270px;width:23px;height:2px;background:#2A36C8;"></div>
<div class="r" style="left:940px;top:334px;width:5px;height:6px;background:#A6A6A6;"></div>
<div class="r" style="left:940px;top:361px;width:5px;height:6px;background:#E0101A;"></div>
<div class="r" style="left:940px;top:369px;width:5px;height:12px;background:#E0101A;"></div>
<div class="r" style="left:940px;top:381px;width:5px;height:4px;background:#A6A6A6;"></div>
<div class="r" style="left:940px;top:401px;width:5px;height:6px;background:#E0101A;"></div>
<div class="r" style="left:940px;top:480px;width:5px;height:6px;background:#A6A6A6;"></div>
<div class="r" style="left:940px;top:490px;width:5px;height:8px;background:#A6A6A6;"></div>
<div class="r" style="left:940px;top:557px;width:5px;height:6px;background:#E0101A;"></div>
<div class="r" style="left:940px;top:569px;width:5px;height:7px;background:#E0101A;"></div>
<div class="r" style="left:940px;top:589px;width:5px;height:7px;background:#E0101A;"></div>
<div class="r" style="left:392px;top:124px;width:530px;height:587px;overflow:hidden;">
<div class="r" style="left:42px;top:0px;width:1px;height:587px;background:repeating-linear-gradient(#C4C4C4 0 3px, transparent 3px 6px);"></div>
<div class="r" style="left:70px;top:0px;width:1px;height:587px;background:repeating-linear-gradient(#C4C4C4 0 3px, transparent 3px 6px);"></div>
<div class="r" style="left:98px;top:18px;width:1px;height:77px;background:repeating-linear-gradient(#C4C4C4 0 3px, transparent 3px 6px);"></div>
<div class="r" style="left:98px;top:146px;width:1px;height:77px;background:repeating-linear-gradient(#C4C4C4 0 3px, transparent 3px 6px);"></div>
<div class="r" style="left:98px;top:274px;width:1px;height:29px;background:repeating-linear-gradient(#C4C4C4 0 3px, transparent 3px 6px);"></div>
<div class="r" style="left:98px;top:354px;width:1px;height:61px;background:repeating-linear-gradient(#C4C4C4 0 3px, transparent 3px 6px);"></div>
<div class="r" style="left:98px;top:466px;width:1px;height:61px;background:repeating-linear-gradient(#C4C4C4 0 3px, transparent 3px 6px);"></div>
<div class="r" style="left:98px;top:578px;width:1px;height:61px;background:repeating-linear-gradient(#C4C4C4 0 3px, transparent 3px 6px);"></div>
<div class="r" style="left:126px;top:50px;width:1px;height:28px;background:repeating-linear-gradient(#C4C4C4 0 3px, transparent 3px 6px);"></div>
<div class="r" style="left:126px;top:178px;width:1px;height:28px;background:repeating-linear-gradient(#C4C4C4 0 3px, transparent 3px 6px);"></div>
<div class="r" style="left:33px;top:13px;width:1px;height:574px;background:#ABABAB;"></div>
<div class="r" style="left:33px;top:96px;width:4px;height:1px;background:#ABABAB;"></div>
<div class="r" style="left:33px;top:112px;width:4px;height:1px;background:#ABABAB;"></div>
<div class="r" style="left:33px;top:224px;width:4px;height:1px;background:#ABABAB;"></div>
<div class="r" style="left:33px;top:240px;width:4px;height:1px;background:#ABABAB;"></div>
<div class="r" style="left:33px;top:320px;width:4px;height:1px;background:#ABABAB;"></div>
<div class="r" style="left:33px;top:432px;width:4px;height:1px;background:#ABABAB;"></div>
<div class="r" style="left:33px;top:544px;width:4px;height:1px;background:#ABABAB;"></div>
<svg class="r" style="left:28px;top:3px" width="9" height="11"><rect x="0" y="0" width="9" height="11" fill="#fff"/><rect x="0.5" y="1.5" width="8" height="8" fill="#fff" stroke="#A5A5A5"/><path d="M2 5.5 H7" stroke="#555"/></svg>
<svg class="r" style="left:28px;top:35px" width="9" height="11"><rect x="0" y="0" width="9" height="11" fill="#fff"/><rect x="0.5" y="1.5" width="8" height="8" fill="#fff" stroke="#A5A5A5"/><path d="M2 5.5 H7" stroke="#555"/></svg>
<svg class="r" style="left:28px;top:131px" width="9" height="11"><rect x="0" y="0" width="9" height="11" fill="#fff"/><rect x="0.5" y="1.5" width="8" height="8" fill="#fff" stroke="#A5A5A5"/><path d="M2 5.5 H7" stroke="#555"/></svg>
<svg class="r" style="left:28px;top:163px" width="9" height="11"><rect x="0" y="0" width="9" height="11" fill="#fff"/><rect x="0.5" y="1.5" width="8" height="8" fill="#fff" stroke="#A5A5A5"/><path d="M2 5.5 H7" stroke="#555"/></svg>
<svg class="r" style="left:28px;top:259px" width="9" height="11"><rect x="0" y="0" width="9" height="11" fill="#fff"/><rect x="0.5" y="1.5" width="8" height="8" fill="#fff" stroke="#A5A5A5"/><path d="M2 5.5 H7" stroke="#555"/></svg>
<svg class="r" style="left:28px;top:339px" width="9" height="11"><rect x="0" y="0" width="9" height="11" fill="#fff"/><rect x="0.5" y="1.5" width="8" height="8" fill="#fff" stroke="#A5A5A5"/><path d="M2 5.5 H7" stroke="#555"/></svg>
<svg class="r" style="left:28px;top:451px" width="9" height="11"><rect x="0" y="0" width="9" height="11" fill="#fff"/><rect x="0.5" y="1.5" width="8" height="8" fill="#fff" stroke="#A5A5A5"/><path d="M2 5.5 H7" stroke="#555"/></svg>
<svg class="r" style="left:28px;top:563px" width="9" height="11"><rect x="0" y="0" width="9" height="11" fill="#fff"/><rect x="0.5" y="1.5" width="8" height="8" fill="#fff" stroke="#A5A5A5"/><path d="M2 5.5 H7" stroke="#555"/></svg>
<div class="code" style="left:95px;top:2px;"><span style="color:#1414B8">public</span> <span style="color:#1414B8">string</span> Culture {</div>
<div class="code" style="left:123px;top:18px;"><span style="color:#1414B8">get</span> { <span style="color:#8A2AB0">return</span> culture; }</div>
<div class="code" style="left:123px;top:34px;"><span style="color:#1414B8">set</span> {</div>
<div class="code" style="left:151px;top:50px;">culture = <span style="color:#1414B8">value</span>;</div>
<div class="code" style="left:151px;top:66px;">full_name = <span style="color:#1414B8">null</span>;</div>
<div class="code" style="left:123px;top:82px;">}</div>
<div class="code" style="left:95px;top:98px;">}</div>
<div class="code" style="left:95px;top:114px;"></div>
<div class="code" style="left:95px;top:130px;"><span style="color:#1414B8">public</span> <span style="color:#3E94B6">Version</span> Version {</div>
<div class="code" style="left:123px;top:146px;"><span style="color:#1414B8">get</span> { <span style="color:#8A2AB0">return</span> version; }</div>
<div class="code" style="left:123px;top:162px;"><span style="color:#1414B8">set</span> {</div>
<div class="code" style="left:151px;top:178px;">version = <span style="color:#3E94B6">Mixin</span>.<span style="color:#74531F">CheckVersion</span> (<span style="color:#1414B8">value</span>);</div>
<div class="code" style="left:151px;top:194px;">full_name = <span style="color:#1414B8">null</span>;</div>
<div class="code" style="left:123px;top:210px;">}</div>
<div class="code" style="left:95px;top:226px;">}</div>
<div class="code" style="left:95px;top:242px;"></div>
<div class="code" style="left:95px;top:258px;"><span style="color:#1414B8">public</span> <span style="color:#3E94B6">AssemblyAttributes</span> Attributes {</div>
<div class="code" style="left:123px;top:274px;"><span style="color:#1414B8">get</span> { <span style="color:#8A2AB0">return</span> (<span style="color:#3E94B6">AssemblyAttributes</span>)attributes; }</div>
<div class="code" style="left:123px;top:290px;"><span style="color:#1414B8">set</span> { attributes = (<span style="color:#1414B8">uint</span>)<span style="color:#1414B8">value</span>; }</div>
<div class="code" style="left:95px;top:306px;">}</div>
<div class="code" style="left:95px;top:322px;"></div>
<div class="code" style="left:95px;top:338px;"><span style="color:#1414B8">public</span> <span style="color:#1414B8">bool</span> HasPublicKey {</div>
<div class="code" style="left:123px;top:354px;"><span style="color:#1414B8">get</span> { <span style="color:#8A2AB0">return</span> attributes.<span style="color:#74531F">GetAttributes</span> ((<span style="color:#1414B8">uint</span>)</div>
<div class="code" style="left:137px;top:370px;"><span style="color:#3E94B6">AssemblyAttributes</span>.PublicKey); }</div>
<div class="code" style="left:123px;top:386px;"><span style="color:#1414B8">set</span> { attributes = attributes.<span style="color:#74531F">SetAttributes</span> ((<span style="color:#1414B8">uint</span>)</div>
<div class="code" style="left:137px;top:402px;"><span style="color:#3E94B6">AssemblyAttributes</span>.PublicKey, <span style="color:#1414B8">value</span>); }</div>
<div class="code" style="left:95px;top:418px;">}</div>
<div class="code" style="left:95px;top:434px;"></div>
<div class="code" style="left:95px;top:450px;"><span style="color:#1414B8">public</span> <span style="color:#1414B8">bool</span> IsSideBySideCompatible {</div>
<div class="code" style="left:123px;top:466px;"><span style="color:#1414B8">get</span> { <span style="color:#8A2AB0">return</span> attributes.<span style="color:#74531F">GetAttributes</span> ((<span style="color:#1414B8">uint</span>)</div>
<div class="code" style="left:137px;top:482px;"><span style="color:#3E94B6">AssemblyAttributes</span>.SideBySideCompatible); }</div>
<div class="code" style="left:123px;top:498px;"><span style="color:#1414B8">set</span> { attributes = attributes.<span style="color:#74531F">SetAttributes</span> ((<span style="color:#1414B8">uint</span>)</div>
<div class="code" style="left:137px;top:514px;"><span style="color:#3E94B6">AssemblyAttributes</span>.SideBySideCompatible, <span style="color:#1414B8">value</span>); }</div>
<div class="code" style="left:95px;top:530px;">}</div>
<div class="code" style="left:95px;top:546px;"></div>
<div class="code" style="left:95px;top:562px;"><span style="color:#1414B8">public</span> <span style="color:#1414B8">bool</span> IsRetargetable {</div>
<div class="code" style="left:123px;top:578px;"><span style="color:#1414B8">get</span> { <span style="color:#8A2AB0">return</span> attributes.<span style="color:#74531F">GetAttributes</span> ((<span style="color:#1414B8">uint</span>)</div>
</div>
<svg class="r" style="left:510px;top:679px;" width="8" height="17" viewBox="0 0 8 17"><path d="M0 0.8 H7 M3.5 0.8 V15.5 M0 15.5 H7" stroke="#111" stroke-width="1.2" fill="none"/></svg>
<div class="r" style="left:31px;top:711px;width:914px;height:17px;background:#E7E8EE;"></div>
<div class="r" style="left:31px;top:711px;width:60px;height:17px;background:#FAFAFC;"></div>
<div class="t" style="left:33.5px;top:714px;font-size:12px;color:#1E1E1E;font-weight:normal;transform-origin:0 0;transform:scaleX(0.88);">100 %</div>
<svg class="r" style="left:82px;top:718px;" width="5" height="3" viewBox="0 0 5 3"><path d="M0 0 H5 L2.5 3 Z" fill="#1E1E1E"/></svg>
<svg class="r" style="left:118px;top:713px;" width="12" height="12" viewBox="0 0 12 12"><circle cx="6" cy="6" r="6" fill="#D9141E"/><path d="M3.5 3.5 L8.5 8.5 M8.5 3.5 L3.5 8.5" stroke="#fff" stroke-width="1.8"/></svg>
<div class="t" style="left:134px;top:713px;font-size:12px;color:#1E1E1E;font-weight:normal;">9</div>
<svg class="r" style="left:163px;top:712px;" width="13" height="13" viewBox="0 0 13 13"><path d="M6.5 0.5 L12.5 12.5 H0.5 Z" fill="#F0D36A" opacity="0.8"/><path d="M6.5 4 V8.5 M6.5 10 V11.5" stroke="#1E1E1E" stroke-width="1.5"/></svg>
<div class="t" style="left:180px;top:713px;font-size:12px;color:#1E1E1E;font-weight:normal;">0</div>
<svg class="r" style="left:219px;top:715px;" width="10" height="9" viewBox="0 0 10 9"><path d="M9.5 4.5 H1.5 M4.5 1 L1 4.5 L4.5 8" stroke="#1B5D93" stroke-width="1.6" fill="none"/></svg>
<svg class="r" style="left:247px;top:715px;" width="10" height="9" viewBox="0 0 10 9"><path d="M0.5 4.5 H8.5 M5.5 1 L9 4.5 L5.5 8" stroke="#1B5D93" stroke-width="1.6" fill="none"/></svg>
<div class="r" style="left:273px;top:713px;width:1px;height:14px;background:#B6B9C8;"></div>
<svg class="r" style="left:288px;top:712px;" width="13" height="14" viewBox="0 0 13 14"><path d="M12 1 L6 7" stroke="#1E1E1E" stroke-width="1.4"/><path d="M6 6 L8 8 L4 13 L1 12 Q4 10 3.5 8 Z" fill="none" stroke="#1E1E1E" stroke-width="1.1"/></svg>
<svg class="r" style="left:305px;top:718px;" width="5" height="3" viewBox="0 0 5 3"><path d="M0 0 H5 L2.5 3 Z" fill="#1E1E1E"/></svg>
<svg class="r" style="left:340px;top:715px;" width="6" height="9" viewBox="0 0 6 9"><path d="M5 0 V9 L0 4.5 Z" fill="#C3C5CF"/></svg>
<svg class="r" style="left:911px;top:715px;" width="6" height="9" viewBox="0 0 6 9"><path d="M0 0 V9 L5 4.5 Z" fill="#C3C5CF"/></svg>
<div class="r" style="left:0px;top:735px;width:948px;height:21px;background:#444D8E;"></div>
<svg class="r" style="left:3px;top:742px;" width="17" height="11" viewBox="0 0 17 11"><path d="M4 0.7 H15.5 L12.5 10.3 H1 Z" fill="none" stroke="#fff" stroke-width="1.2"/></svg>
<div class="t" style="left:28px;top:741px;font-size:12px;color:#FFFFFF;font-weight:normal;transform-origin:0 0;transform:scaleX(0.89);">Ready</div>
<div class="t" style="left:142.5px;top:741px;font-size:12px;color:#FFFFFF;font-weight:normal;transform-origin:0 0;transform:scaleX(0.9);">Ln 70</div>
<div class="t" style="left:234.5px;top:741px;font-size:12px;color:#FFFFFF;font-weight:normal;transform-origin:0 0;transform:scaleX(0.92);">Col 13</div>
<div class="t" style="left:326.5px;top:741px;font-size:12px;color:#FFFFFF;font-weight:normal;transform-origin:0 0;transform:scaleX(0.92);">Ch 4</div>
<div class="t" style="left:462.5px;top:741px;font-size:12px;color:#FFFFFF;font-weight:normal;transform-origin:0 0;transform:scaleX(0.88);">INS</div>
<div class="t" style="left:749.3px;top:741px;font-size:12px;color:#FFFFFF;font-weight:normal;transform-origin:0 0;transform:scaleX(0.995);">Add to Source Control</div>
<svg class="r" style="left:730px;top:741px;" width="10" height="13" viewBox="0 0 10 13"><path d="M5 13 V2 M1 5.5 L5 1.5 L9 5.5" stroke="#fff" stroke-width="1.5" fill="none"/></svg>
<svg class="r" style="left:873px;top:744px;" width="9" height="5" viewBox="0 0 9 5"><path d="M0 5 H9 L4.5 0 Z" fill="#fff"/></svg>
<svg class="r" style="left:902px;top:739px;" width="13" height="14" viewBox="0 0 13 14"><path d="M6.5 0.5 Q11 1 11 6 V9.5 L12.5 11 H0.5 L2 9.5 V6 Q2 1 6.5 0.5 Z" fill="#D8DBEA"/><circle cx="6.5" cy="12.5" r="1.5" fill="#D8DBEA"/></svg>
<svg class="r" style="left:940px;top:748px;" width="8" height="8" viewBox="0 0 8 8"><g fill="#9AA0C0"><rect x="6" y="0" width="1" height="1"/><rect x="4" y="2" width="1" height="1"/><rect x="6" y="2" width="1" height="1"/><rect x="2" y="4" width="1" height="1"/><rect x="4" y="4" width="1" height="1"/><rect x="6" y="4" width="1" height="1"/></g></svg>
</body></html>
